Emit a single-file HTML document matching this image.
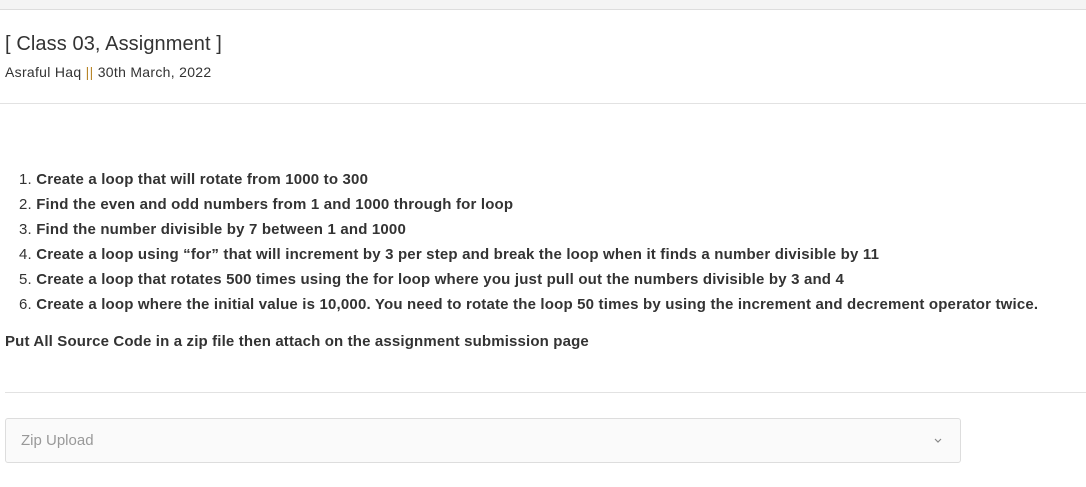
<!DOCTYPE html>
<html><head><meta charset="utf-8"><style>
body{margin:0;width:1086px;height:487px;background:#fff;font-family:"Liberation Sans",sans-serif;color:#333;position:relative;overflow:hidden}
.top{position:absolute;left:0;top:0;width:1086px;height:9px;background:#f4f4f4;border-bottom:1px solid #ddd}
.a{position:absolute;white-space:nowrap}
.t{left:5px;top:33px;font-size:20px;color:#333;letter-spacing:0.1px}
.s{left:5px;top:64px;font-size:14px;color:#333;letter-spacing:0.3px}
.hr{position:absolute;height:1px;background:#e2e2e2}
.li{position:absolute;left:19px;font-size:15px;white-space:nowrap;letter-spacing:0.18px}
.li b{font-weight:bold;color:#333}
.sel{position:absolute;left:5px;top:418px;width:954px;height:43px;background:#fafafa;border:1px solid #ddd;border-radius:3px}
</style></head><body>
<div class="top"></div>
<div class="a t">[ Class 03, Assignment ]</div>
<div class="a s">Asraful Haq <span style="color:#b8862a">||</span> 30th March, 2022</div>
<div class="hr" style="left:0;top:103px;width:1086px"></div>
<div class="li" style="top:171px">1. <b>Create a loop that will rotate from 1000 to 300</b></div>
<div class="li" style="top:196px">2. <b>Find the even and odd numbers from 1 and 1000 through for loop</b></div>
<div class="li" style="top:221px">3. <b>Find the number divisible by 7 between 1 and 1000</b></div>
<div class="li" style="top:246px">4. <b>Create a loop using “for” that will increment by 3 per step and break the loop when it finds a number divisible by 11</b></div>
<div class="li" style="top:271px">5. <b>Create a loop that rotates 500 times using the for loop where you just pull out the numbers divisible by 3 and 4</b></div>
<div class="li" style="top:296px">6. <b>Create a loop where the initial value is 10,000. You need to rotate the loop 50 times by using the increment and decrement operator twice.</b></div>
<div class="li" style="left:5px;top:333px;letter-spacing:0.15px"><b>Put All Source Code in a zip file then attach on the assignment submission page</b></div>
<div class="hr" style="left:5px;top:392px;width:1081px"></div>
<div class="sel">
<div class="a" style="left:15px;top:13px;font-size:15px;color:#999">Zip Upload</div>
<svg class="a" style="left:927px;top:18px" width="10" height="8" viewBox="0 0 10 8"><path d="M2 2 L5 5 L8 2" fill="none" stroke="#888" stroke-width="1.2"/></svg>
</div>
</body></html>
